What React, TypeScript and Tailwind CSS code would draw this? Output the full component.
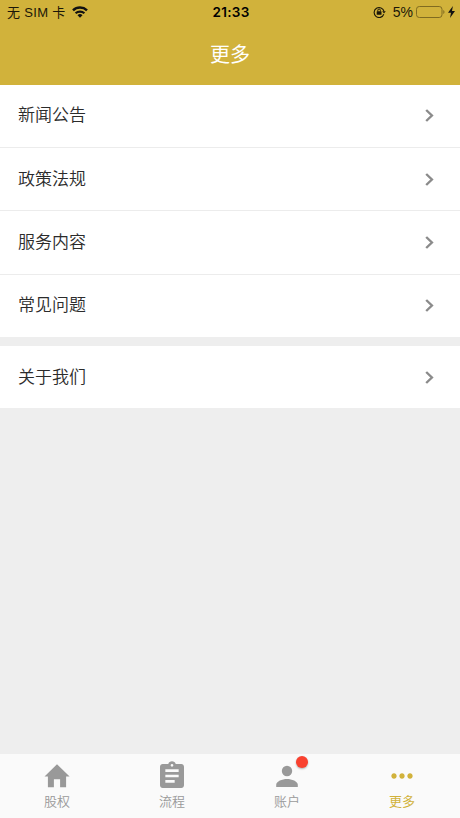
import { MdAssignment, MdMoreHoriz } from "react-icons/md";

const groups = [
  ["新闻公告", "政策法规", "服务内容", "常见问题"],
  ["关于我们"],
];

const tabs = [
  { icon: HomeIcon, label: "股权" },
  { icon: MdAssignment, label: "流程" },
  { icon: PersonIcon, label: "账户", badge: true },
  { icon: MdMoreHoriz, label: "更多", active: true },
];

function HomeIcon({ size }: { size: number }) {
  return (
    <svg width={size} height={size} viewBox="0 0 32 32" fill="currentColor">
      <path d="M16 4.3 28.6 16.5h-3.5v10.7h-6v-7.9h-6.2v7.9h-6V16.5H3.5z" />
    </svg>
  );
}

function PersonIcon({ size }: { size: number }) {
  return (
    <svg width={size} height={size} viewBox="0 0 32 32" fill="currentColor">
      <circle cx="16" cy="11" r="5.2" />
      <path d="M5.2 27v-2.2c0-3.7 6-5.9 10.8-5.9s10.8 2.2 10.8 5.9V27z" />
    </svg>
  );
}

function WifiIcon() {
  return (
    <svg width="16" height="12" viewBox="0 0 16 12" fill="none" stroke="#111" strokeWidth="2.5">
      <path d="M1 4.3a10.2 10.2 0 0 1 14 0" />
      <path d="M3.6 7.3a6.4 6.4 0 0 1 8.8 0" strokeWidth="2.2" />
      <path d="M8 11.8 5.5 9.2a3.6 3.6 0 0 1 5 0z" fill="#111" stroke="none" />
    </svg>
  );
}

function RotationLockIcon() {
  return (
    <svg width="13" height="12" viewBox="0 0 13 12" fill="none" stroke="#1b1708">
      <path d="M10.8 8.3A5 5 0 1 1 11 5.4" strokeWidth="1.1" />
      <path d="M9.2 5.2h3.6L11 7.6z" fill="#1b1708" stroke="none" />
      <rect x="3.7" y="5.3" width="4.8" height="3.5" rx=".4" fill="#1b1708" stroke="none" />
      <path d="M4.8 5.5V4.3a1.3 1.3 0 0 1 2.6 0v1.2" strokeWidth="1" />
    </svg>
  );
}

function BatteryIcon() {
  return (
    <svg width="29" height="12" viewBox="0 0 29 12" fill="none">
      <rect x=".5" y=".5" width="25.5" height="11" rx="2.8" stroke="#806b20" />
      <path d="M27.3 4c1.6.7 1.6 3.3 0 4z" fill="#806b20" />
    </svg>
  );
}

function StatusBar() {
  return (
    <div className="grid h-6 grid-cols-3 items-center pl-[7px] pr-[5px] text-[13px] text-[#1b1708]">
      <div className="flex items-center gap-[6px]">
        <span className="whitespace-nowrap pt-px font-['Liberation_Sans','Noto_Sans_CJK_SC',sans-serif] tracking-[0.32px]">
          无 SIM 卡
        </span>
        <WifiIcon />
      </div>
      <div className="text-center text-[13.5px] font-semibold tracking-[0.3px] text-black">21:33</div>
      <div className="flex items-center justify-end">
        <RotationLockIcon />
        <span className="ml-[7px] mr-[3px] font-['Liberation_Sans',sans-serif] text-[14px]">5%</span>
        <BatteryIcon />
        <svg className="ml-[3px]" width="7" height="12" viewBox="0 0 7 12" fill="#111">
          <path d="M4.9 0 0 6.7h3L2 12l5-7H4z" />
        </svg>
      </div>
    </div>
  );
}

function Row({ label }: { label: string }) {
  return (
    <div className="flex h-[63.3px] items-center justify-between border-b border-[#ececec] pl-[18px] pr-[26px] last:h-[62.4px] last:border-b-0">
      <span className="pb-px text-[17px] font-[350] leading-6 text-[#2b2b2b]">{label}</span>
      <svg width="9" height="13" viewBox="0 0 9 13" fill="none" stroke="#8b8b8b" strokeWidth="2.4">
        <path d="m1.2 1 5.7 5.5L1.2 12" />
      </svg>
    </div>
  );
}

export default function App() {
  return (
    <div className="flex h-[818px] w-[460px] flex-col overflow-hidden bg-[#eeeeee] font-['Inter','Noto_Sans_CJK_SC',sans-serif]">
      <header className="h-[84.7px] shrink-0 bg-[#d1b23b]">
        <StatusBar />
        <h1 className="pt-4 text-center text-[20px] leading-[30px] text-white">更多</h1>
      </header>

      <main className="flex flex-1 flex-col gap-[9px]">
        {groups.map((items) => (
          <section key={items[0]} className="bg-white">
            {items.map((label) => (
              <Row key={label} label={label} />
            ))}
          </section>
        ))}
      </main>

      <nav className="grid h-[64px] shrink-0 grid-cols-4 bg-[#fafafa]">
        {tabs.map((tab) => (
          <div
            key={tab.label}
            className={`flex flex-col items-center pr-px pt-[6px] ${tab.active ? "text-[#d1b23b]" : "text-[#999999]"}`}
          >
            <div className="relative">
              <tab.icon size={32} />
              {tab.badge && (
                <span className="absolute -top-[4px] left-[25px] size-[12px] rounded-full bg-[#f9412f] shadow-[0_1px_2px_rgba(0,0,0,0.3)]" />
              )}
            </div>
            <span className={`text-[13px] leading-[18px] ${tab.active ? "font-normal" : "font-[350]"}`}>{tab.label}</span>
          </div>
        ))}
      </nav>
    </div>
  );
}
